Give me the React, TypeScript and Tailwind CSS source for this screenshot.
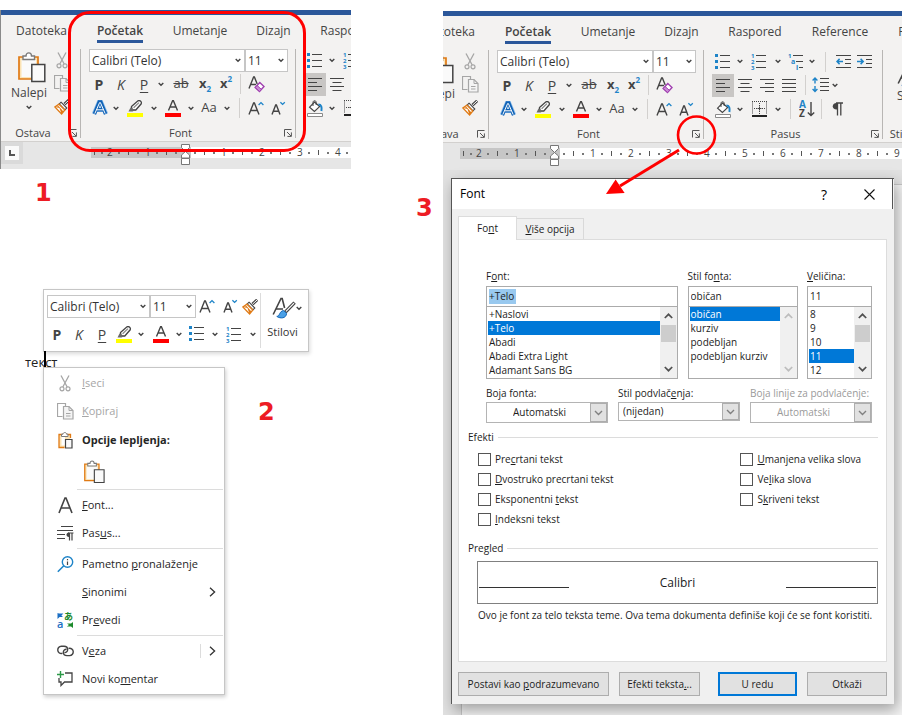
import React from "react";

const INK = "#444444";
const BLUE = "#1e84c8";
const ORANGE = "#e07a14";

/* Text with a mnemonic: the letter after "&" is underlined. */
function Mn({ t }: { t: string }) {
  const i = t.indexOf("&");
  if (i < 0) return <>{t}</>;
  return (
    <>
      {t.slice(0, i)}
      <u>{t[i + 1]}</u>
      {t.slice(i + 2)}
    </>
  );
}

/* ---------- icons ---------- */

function Svg({ w = 16, h = 16, children }: { w?: number; h?: number; children: React.ReactNode }) {
  return (
    <svg width={w} height={h} viewBox={`0 0 ${w} ${h}`} fill="none" className="shrink-0" aria-hidden="true">
      {children}
    </svg>
  );
}

function Chevron() {
  return (
    <Svg w={6} h={5}>
      <path d="M0.7 1 L3 3.3 L5.3 1" stroke={INK} strokeWidth="1.4" />
    </Svg>
  );
}

function CutIcon() {
  return (
    <Svg w={12} h={17}>
      <path d="M2 0.5 L8.2 12 M10 0.5 L3.8 12" stroke="#a6a6a6" strokeWidth="1.3" />
      <circle cx="3" cy="13.8" r="2" stroke="#a6a6a6" strokeWidth="1.2" />
      <circle cx="9" cy="13.8" r="2" stroke="#a6a6a6" strokeWidth="1.2" />
    </Svg>
  );
}

function CopyIcon() {
  return (
    <Svg w={17} h={17}>
      <path d="M5.5 13.5 H0.5 V0.5 H8.5 V3" stroke="#a6a6a6" strokeWidth="1.2" />
      <path d="M6.5 3.5 H12 L16 7.5 V16 H6.5 Z" fill="#f4f4f4" stroke="#a6a6a6" strokeWidth="1.2" />
      <path d="M12 3.5 V7.5 H16 M9 10.5 H13.5 M9 13 H13.5" stroke="#a6a6a6" />
    </Svg>
  );
}

function BrushIcon() {
  return (
    <Svg w={16} h={16}>
      <path d="M15.2 0.8 L10.5 5.2" stroke={INK} strokeWidth="3" />
      <path d="M15 1 L10.5 5.2" stroke="#fff" />
      <path d="M7 3.2 L12.8 9 L11 10.8 L5.2 5 Z" fill="#fff" stroke={INK} strokeWidth="1.1" />
      <path d="M5 5.2 L10.8 11 L7.6 15 L0.8 8 Z" fill="#fff" stroke={ORANGE} strokeWidth="1.3" />
      <path d="M1.2 8 L5.4 9 L7.4 14.6 L9.4 12.4 L4.6 7 Z" fill={ORANGE} />
    </Svg>
  );
}

function ClipboardIcon({ w = 28, h = 31 }: { w?: number; h?: number }) {
  return (
    <svg width={w} height={h} viewBox="0 0 28 31" fill="none" className="shrink-0" aria-hidden="true">
      <path d="M1 5 H20 V27 H1 Z" fill="#fbe3b4" stroke={ORANGE} strokeWidth="1.7" />
      <path d="M3.5 8 H18 V25 H3.5 Z" fill="#fafafa" />
      <path d="M5 7.5 V4 H8 C8 -0.2 13.5 -0.2 13.5 4 H16.5 V7.5 Z" fill="#fff" stroke="#7a7a7a" strokeWidth="1.4" />
      <path d="M13.8 12.5 H26.8 V29.5 H13.8 Z" fill="#fafafa" stroke={INK} strokeWidth="1.5" />
    </svg>
  );
}

function SmallClipboardIcon() {
  return (
    <Svg w={15} h={17}>
      <path d="M6.5 15.5 H1 V2.5 H12.5 V6" fill="#fbe3b4" stroke={ORANGE} strokeWidth="1.3" />
      <path d="M3.5 5 H7 V13.5 H3.5 Z" fill="#fff" />
      <path d="M3.5 4.5 V2.2 H5 C5 0 8.6 0 8.6 2.2 H10 V4.5 Z" fill="#fff" stroke="#7a7a7a" />
      <path d="M7.5 7.5 H14 V16 H7.5 Z" fill="#fafafa" stroke={INK} strokeWidth="1.2" />
    </Svg>
  );
}

function EraserIcon() {
  return (
    <Svg w={17} h={17}>
      <path d="M1 12.5 L5.6 1 H6.4 L9.2 8 M2.7 8.5 H8" stroke={INK} strokeWidth="1.4" />
      <path d="M11.8 6.5 L16 10.5 L11.5 15.5 L7.2 11.5 Z" fill="#fff" stroke="#a03fb0" strokeWidth="1.4" />
      <path d="M9 9.4 L13.4 13.4 L11.5 15.5 L7.2 11.5 Z" fill="#c98ad6" stroke="#a03fb0" />
    </Svg>
  );
}

function GlowAIcon() {
  return (
    <Svg w={16} h={16}>
      <path d="M2 14 L7 2 H9 L14 14 M4.5 9.8 H11.5" stroke="#8fbfec" strokeWidth="4.4" />
      <path d="M2.4 14 L7.2 2 H8.8 L13.6 14 M4.6 9.8 H11.4" stroke="#1062b5" strokeWidth="3.4" />
      <path d="M2.8 13.6 L7.6 2.6 H8.4 L13.2 13.6 M4.8 9.8 H11.2" stroke="#fff" strokeWidth="1" />
    </Svg>
  );
}

function HighlighterIcon() {
  return (
    <Svg w={16} h={17}>
      <path d="M4.5 6.5 L11 0.8 C13 0 15 1.6 14.2 3.8 L8.8 10 H5 Z" fill="#fff" stroke={INK} strokeWidth="1.3" />
      <path d="M3.6 7.2 L8.2 10.2 L5.5 11.6 H1.5 Z" fill="#6a6a6a" />
      <path d="M6.6 7.8 L12 2.6" stroke="#8a8a8a" strokeWidth="1.3" />
      <rect y="13" width="16" height="4" fill="#ffff00" />
    </Svg>
  );
}

function FontColorIcon() {
  return (
    <Svg w={16} h={17}>
      <path d="M3.5 10.5 L7.6 0.8 H8.4 L12.5 10.5 M5 7 H11" stroke={INK} strokeWidth="1.4" />
      <rect y="13" width="16" height="4" fill="#ff0000" />
    </Svg>
  );
}

function GrowIcon() {
  return (
    <Svg w={16} h={15}>
      <path d="M1 13.5 L5.6 2 H6.4 L11 13.5 M2.7 9.5 H9.3" stroke={INK} strokeWidth="1.4" />
      <path d="M10.6 4 L13 1.6 L15.4 4" stroke={BLUE} strokeWidth="1.3" />
    </Svg>
  );
}

function ShrinkIcon() {
  return (
    <Svg w={15} h={15}>
      <path d="M1 13.5 L4.7 4 H5.4 L9 13.5 M2.4 10.2 H7.6" stroke={INK} strokeWidth="1.4" />
      <path d="M9.4 1.2 L11.6 3.4 L13.8 1.2" stroke={BLUE} strokeWidth="1.3" />
    </Svg>
  );
}

function BulletsIcon() {
  return (
    <Svg w={16} h={16}>
      <path d="M0 0 h3 v3 h-3z M0 6 h3 v3 h-3z M0 12 h3 v3 h-3z" fill={BLUE} />
      <path d="M5 1.5 H15 M5 7.5 H15 M5 13.5 H15" stroke={INK} strokeWidth="1.2" />
    </Svg>
  );
}

function IconText({ x, y, s = 6, c = BLUE, t }: { x: number; y: number; s?: number; c?: string; t: string }) {
  return (
    <text x={x} y={y} fontSize={s} fontWeight="700" fill={c} fontFamily="Open Sans, sans-serif">
      {t}
    </text>
  );
}

function NumberingIcon() {
  return (
    <Svg w={16} h={17}>
      <IconText x={0} y={5} t="1" />
      <IconText x={0} y={11} t="2" />
      <IconText x={0} y={17} t="3" />
      <path d="M5 2.5 H15 M5 8.5 H15 M5 14.5 H15" stroke={INK} strokeWidth="1.2" />
    </Svg>
  );
}

function MultilevelIcon() {
  return (
    <Svg w={17} h={17}>
      <IconText x={0} y={5} t="1" />
      <IconText x={3} y={11} s={7} t="a" />
      <IconText x={8} y={17} s={7} t="i" />
      <path d="M5 2.5 H15 M8 8.5 H15 M11 14.5 H15" stroke={INK} strokeWidth="1.2" />
    </Svg>
  );
}

function IndentIcon({ out = false }: { out?: boolean }) {
  return (
    <Svg w={15} h={15}>
      <path d="M0 1.5 H15 M9 5.5 H15 M9 9.5 H15 M0 13.5 H15" stroke={INK} strokeWidth="1.2" />
      <path d={out ? "M7 7.5 H1 M3.6 4.9 L1 7.5 L3.6 10.1" : "M0 7.5 H6 M3.6 4.9 L6.2 7.5 L3.6 10.1"} stroke={BLUE} strokeWidth="1.5" />
    </Svg>
  );
}

function AlignIcon({ kind }: { kind: "left" | "center" | "right" | "justify" }) {
  const d = {
    left: "M0 1.5 H14 M0 5.5 H9 M0 9.5 H14 M0 13.5 H9",
    center: "M0 1.5 H14 M2.5 5.5 H11.5 M0 9.5 H14 M2.5 13.5 H11.5",
    right: "M0 1.5 H14 M5 5.5 H14 M0 9.5 H14 M5 13.5 H14",
    justify: "M0 1.5 H14 M0 5.5 H14 M0 9.5 H14 M0 13.5 H14",
  }[kind];
  return (
    <Svg w={14} h={15}>
      <path d={d} stroke={INK} strokeWidth="1.2" />
    </Svg>
  );
}

function SpacingIcon() {
  return (
    <Svg w={17} h={16}>
      <path d="M3 1 V6.5 M0.6 3.4 L3 1 L5.4 3.4 M3 9 V14.5 M0.6 12 L3 14.4 L5.4 12" stroke={BLUE} strokeWidth="1.4" />
      <path d="M8 1.5 H17 M8 5.5 H17 M8 9.5 H17 M8 13.5 H17" stroke={INK} strokeWidth="1.2" />
    </Svg>
  );
}

function BucketIcon() {
  return (
    <Svg w={16} h={17}>
      <path d="M7.5 2 L12.6 6.6 L7.4 11.4 L2.6 7.2 Z" fill="#fff" stroke={INK} strokeWidth="1.2" />
      <path d="M6 6 V2.4 C6 0.2 9.2 0.2 9.2 2.4 V5" stroke={INK} />
      <path d="M11.4 4.6 C14.4 4.6 15 7 14.4 11" stroke={BLUE} strokeWidth="2" />
      <path d="M0.5 13.5 H15.5 V16.5 H0.5 Z" fill="#fff" stroke="#8a8a8a" />
    </Svg>
  );
}

function BordersIcon() {
  return (
    <Svg w={15} h={16}>
      <path d="M0.5 0.5 V13 M14.5 0.5 V13 M0 0.5 H15 M7.5 2 V13 M2 7.5 H13" stroke={INK} strokeDasharray="1 1" />
      <path d="M5.5 7.5 H9.5 M7.5 5.5 V9.5" stroke={INK} />
      <rect y="14" width="15" height="2" fill="#222" />
    </Svg>
  );
}

function SortIcon() {
  return (
    <Svg w={16} h={18}>
      <IconText x={0} y={8} s={10} t="A" />
      <IconText x={0} y={17} s={10} c={INK} t="Z" />
      <path d="M12 2 V15.5 M8.8 12.4 L12 15.6 L15.2 12.4" stroke={INK} strokeWidth="1.4" />
    </Svg>
  );
}

function PilcrowIcon() {
  return (
    <Svg w={11} h={14}>
      <path d="M5 1 H4.5 C-0.5 1 -0.5 7.4 4.5 7.4 H5 Z" fill={INK} />
      <path d="M4 1 H11 M5.5 1 V13.5 M8.8 1 V13.5" stroke={INK} strokeWidth="1.3" />
    </Svg>
  );
}

function StylesIcon() {
  return (
    <Svg w={24} h={22}>
      <path d="M1.2 17.5 L9 1.5 H10.2 L12.6 11 M4 12 H11" stroke={INK} strokeWidth="1.6" />
      <path d="M22.6 5.6 L13.4 15" stroke={INK} strokeWidth="3.4" />
      <path d="M22 6.2 L14 14.4" stroke="#fff" strokeWidth="1.2" />
      <path d="M4.8 19.4 C8 19.4 7.2 14 11.6 13.6 L14.6 16.4 C14.2 21.4 8.6 22 4.8 19.4 Z" fill="#4aa0e6" stroke="#1568b8" />
    </Svg>
  );
}

function LauncherIcon() {
  return (
    <Svg w={8} h={8}>
      <path d="M0.5 7.5 V0.5 H7.5 M3 3 L7 7 M7.4 3.4 V7.4 H3.4" stroke="#555" />
    </Svg>
  );
}

/* ---------- shared controls ---------- */

function Tool({ w, label, on = false, children }: { w: string; label: string; on?: boolean; children: React.ReactNode }) {
  return (
    <button
      type="button"
      aria-label={label}
      className={`${w} flex h-[23px] shrink-0 items-center justify-center text-[#444444] ${on ? "bg-[#c8c6c4]" : ""}`}
    >
      {children}
    </button>
  );
}

function Drop({ w, label }: { w: string; label: string }) {
  return (
    <Tool w={w} label={label}>
      <Chevron />
    </Tool>
  );
}

function Sep({ w }: { w: string }) {
  return (
    <span className={`${w} flex h-[20px] shrink-0 justify-center`}>
      <span className="w-px bg-[#d2d0ce]" />
    </span>
  );
}

function Combo({ w, label, value }: { w: string; label: string; value: string }) {
  return (
    <div className={`${w} relative h-[23px] shrink-0 border border-[#c6c6c6] bg-white`}>
      <select aria-label={label} className="block h-full w-full appearance-none bg-transparent pl-[2px] text-[12px] text-[#333333] outline-none">
        <option>{value}</option>
      </select>
      <span className="pointer-events-none absolute inset-y-0 right-[3px] flex items-center">
        <Chevron />
      </span>
    </div>
  );
}

const Bold = () => <span className="text-[14px] font-bold">P</span>;
const Italic = () => <span className="text-[14px] italic">K</span>;
const Underlined = () => <span className="text-[14px] underline underline-offset-2">P</span>;

/* ---------- ribbon ---------- */

const TABS = [
  { name: "Datoteka", w: "w-[81px]" },
  { name: "Početak", w: "w-[76px]" },
  { name: "Umetanje", w: "w-[84px]" },
  { name: "Dizajn", w: "w-[63px]" },
  { name: "Raspored", w: "w-[84px]" },
  { name: "Reference", w: "w-[86px]" },
  { name: "Pisma", w: "w-[64px]" },
];

function Group({ w, name, children }: { w: string; name: string; children: React.ReactNode }) {
  return (
    <div className={`${w} flex shrink-0`}>
      <div className="flex min-w-0 flex-1 flex-col">
        <div className="h-[71px]">{children}</div>
        <div className="mt-[5px] flex h-[16px] items-center">
          <span className="flex-1 text-center text-[11px] leading-[16px] text-[#444444]">{name}</span>
          <button type="button" aria-label={`${name}: više opcija`} className="flex w-[15px] justify-center">
            <LauncherIcon />
          </button>
        </div>
      </div>
      <span className="h-[89px] w-px bg-[#b8b6b4]" />
    </div>
  );
}

function Ribbon({ short = false }: { short?: boolean }) {
  return (
    <div className="w-max">
      <nav className="flex h-[34px] pt-[7px]">
        {TABS.slice(0, short ? 5 : 7).map((t) => (
          <button key={t.name} type="button" className={`${t.w} flex shrink-0 justify-center text-[13px] leading-[17px] text-[#444444]`}>
            <span className={t.name === "Početak" ? "h-[21px] border-b-[3px] border-[#2b579a] text-[12px] font-semibold" : "h-[21px] text-[12px]"}>
              {t.name}
            </span>
          </button>
        ))}
      </nav>
      <div className="flex">
        <Group w="w-[80px]" name="Ostava">
          <div className="flex pl-[3px]">
            <button type="button" className="flex w-[50px] flex-col items-center pt-[3px] text-[12px] leading-[16px] text-[#444444]">
              <span className="pl-[6px]">
                <ClipboardIcon />
              </span>
              <span className="pt-[2px] pb-[4px]">Nalepi</span>
              <Chevron />
            </button>
            <div className="flex flex-col">
              <Tool w="w-[16px]" label="Iseci">
                <CutIcon />
              </Tool>
              <Tool w="w-[16px]" label="Kopiraj">
                <CopyIcon />
              </Tool>
              <Tool w="w-[16px]" label="Prenosilac oblikovanja">
                <BrushIcon />
              </Tool>
            </div>
          </div>
        </Group>
        <Group w="w-[215px]" name="Font">
          <div className="pl-[8px]">
            <div className="flex">
              <Combo w="w-[156px]" label="Font" value="Calibri (Telo)" />
              <Combo w="w-[43px]" label="Veličina fonta" value="11" />
            </div>
            <div className="flex h-[24px] items-center">
              <Tool w="w-[20px]" label="Podebljano"><Bold /></Tool>
              <Tool w="w-[24px]" label="Kurziv"><Italic /></Tool>
              <Tool w="w-[22px]" label="Podvučeno"><Underlined /></Tool>
              <Drop w="w-[12px]" label="Stil podvlačenja" />
              <Tool w="w-[28px]" label="Precrtano"><span className="text-[13px] line-through">ab</span></Tool>
              <Tool w="w-[20px]" label="Indeksni tekst">
                <span className="text-[13px] font-bold">x</span>
                <span className="pt-[10px] text-[8px] font-bold text-[#1e84c8]">2</span>
              </Tool>
              <Tool w="w-[22px]" label="Eksponentni tekst">
                <span className="text-[13px] font-bold">x</span>
                <span className="pb-[10px] text-[8px] font-bold text-[#1e84c8]">2</span>
              </Tool>
              <Sep w="w-[6px]" />
              <Tool w="w-[26px]" label="Obriši oblikovanje"><EraserIcon /></Tool>
            </div>
            <div className="flex h-[24px] items-center">
              <Tool w="w-[22px]" label="Efekti teksta"><GlowAIcon /></Tool>
              <Drop w="w-[10px]" label="Izbor efekta teksta" />
              <Tool w="w-[28px]" label="Boja isticanja"><HighlighterIcon /></Tool>
              <Drop w="w-[10px]" label="Izbor boje isticanja" />
              <Tool w="w-[28px]" label="Boja fonta"><FontColorIcon /></Tool>
              <Drop w="w-[8px]" label="Izbor boje fonta" />
              <Tool w="w-[28px]" label="Promeni veličinu slova"><span className="text-[13px]">Aa</span></Tool>
              <Drop w="w-[8px]" label="Izbor veličine slova" />
              <Sep w="w-[16px]" />
              <Tool w="w-[18px]" label="Povećaj font"><GrowIcon /></Tool>
              <Tool w="w-[26px]" label="Smanji font"><ShrinkIcon /></Tool>
            </div>
          </div>
        </Group>
        <Group w="w-[179px]" name="Pasus">
          <div className="pl-[8px]">
            <div className="flex h-[23px] items-center">
              <Tool w="w-[22px]" label="Znakovi za nabrajanje"><BulletsIcon /></Tool>
              <Drop w="w-[12px]" label="Izbor znaka" />
              <Tool w="w-[26px]" label="Numerisanje"><NumberingIcon /></Tool>
              <Drop w="w-[12px]" label="Izbor numerisanja" />
              <Tool w="w-[24px]" label="Lista sa više nivoa"><MultilevelIcon /></Tool>
              <Drop w="w-[8px]" label="Izbor liste" />
              <Sep w="w-[18px]" />
              <Tool w="w-[18px]" label="Smanji uvlačenje"><IndentIcon out /></Tool>
              <Tool w="w-[24px]" label="Povećaj uvlačenje"><IndentIcon /></Tool>
            </div>
            <div className="flex h-[24px] items-center">
              <Tool w="w-[22px]" label="Poravnaj nalevo" on><AlignIcon kind="left" /></Tool>
              <Tool w="w-[22px]" label="Centriraj"><AlignIcon kind="center" /></Tool>
              <Tool w="w-[22px]" label="Poravnaj nadesno"><AlignIcon kind="right" /></Tool>
              <Tool w="w-[22px]" label="Obostrano poravnaj"><AlignIcon kind="justify" /></Tool>
              <Sep w="w-[10px]" />
              <Tool w="w-[20px]" label="Prored"><SpacingIcon /></Tool>
              <Drop w="w-[10px]" label="Izbor proreda" />
            </div>
            <div className="flex h-[24px] items-center">
              <Tool w="w-[22px]" label="Senčenje"><BucketIcon /></Tool>
              <Drop w="w-[12px]" label="Izbor senčenja" />
              <Tool w="w-[26px]" label="Ivice"><BordersIcon /></Tool>
              <Drop w="w-[12px]" label="Izbor ivica" />
              <Sep w="w-[12px]" />
              <Tool w="w-[22px]" label="Sortiraj"><SortIcon /></Tool>
              <Sep w="w-[6px]" />
              <Tool w="w-[26px]" label="Prikaži znakove"><PilcrowIcon /></Tool>
            </div>
          </div>
        </Group>
        {!short && (
          <Group w="w-[60px]" name="Stilovi">
            <button type="button" className="flex flex-col items-start pt-[16px] pl-[14px] text-[12px] leading-[16px] text-[#444444]">
              <StylesIcon />
              <span>Stilovi</span>
            </button>
          </Group>
        )}
      </div>
    </div>
  );
}

/* ---------- ruler ---------- */

const Dot = () => <span className="size-[2px] bg-[#777777]" />;
const Tick = () => <span className="h-[5px] w-px bg-[#555555]" />;

function Unit({ n }: { n: string }) {
  return (
    <div className="grid w-[38px] shrink-0 grid-cols-4 place-items-center">
      <span>{n}</span>
      <Dot />
      <Tick />
      <Dot />
    </div>
  );
}

function Ruler({ units }: { units: string[] }) {
  return (
    <div className="flex h-[11px] min-w-0 flex-1 overflow-visible text-[10px] leading-[11px] text-[#444444]">
      <div className="flex bg-[#c6c6c6]">
        <div className="grid w-[14px] shrink-0 grid-cols-2 place-items-center">
          <Tick />
          <Dot />
        </div>
        <Unit n="2" />
        <Unit n="1" />
      </div>
      <div className="relative flex min-w-0 flex-1 bg-white">
        <div className="grid w-[38px] shrink-0 grid-cols-4 place-items-center">
          <span className="h-full w-full bg-[#c6c6c6]" />
          <Dot />
          <Tick />
          <Dot />
        </div>
        <span className="absolute -top-[3px] left-0">
          <svg width="9" height="21" viewBox="0 0 9 21" className="block" aria-hidden="true">
            <path d="M0.5 0.5 H8.5 V3.5 L4.5 7.5 L0.5 3.5 Z M0.5 14 H8.5 V11 L4.5 7.5 L0.5 11 Z M0.5 14.5 H8.5 V20.5 H0.5 Z" fill="#fff" stroke="#777" />
          </svg>
        </span>
        <div className="flex min-w-0 flex-1 overflow-hidden">
          {units.map((n) => (
            <Unit key={n} n={n} />
          ))}
        </div>
      </div>
    </div>
  );
}

/* ---------- panel 1 ---------- */

function RibbonShot() {
  return (
    <section className="relative">
      <div className="overflow-hidden border-l border-[#8a8a8a] bg-[#e6e6e6]">
        <div className="h-[5px] bg-[#2b579a]" />
        <div className="overflow-hidden border-b border-[#d2d0ce] bg-[#f3f2f1]">
          <Ribbon short />
        </div>
        <div className="flex h-[27px] items-start">
          <button type="button" aria-label="Tabulator nalevo" className="flex h-[22px] w-[22px] items-center justify-center bg-[#dadada]">
            <span className="flex h-[14px] w-[14px] items-center justify-center bg-[#fafafa]">
              <span className="h-[6px] w-[6px] border-b-2 border-l-2 border-[#555555]" />
            </span>
          </button>
          <div className="ml-[68px] flex min-w-0 flex-1 pt-[5px]">
            <Ruler units={["1", "2", "3", "4"]} />
          </div>
        </div>
      </div>
      <div className="pointer-events-none absolute top-[1px] left-[68px] h-[141px] w-[238px] rounded-[22px] border-[3px] border-[#ff0000]" />
    </section>
  );
}

/* ---------- panel 2 ---------- */

function MiniToolbar() {
  return (
    <div className="flex h-[63px] w-[266px] border border-[#c6c6c6] bg-white shadow-[1px_2px_4px_rgba(0,0,0,0.15)]">
      <div className="w-[216px] pt-[5px] pl-[3px]">
        <div className="flex">
          <Combo w="w-[103px]" label="Font" value="Calibri (Telo)" />
          <Combo w="w-[46px]" label="Veličina fonta" value="11" />
          <Tool w="w-[22px]" label="Povećaj font"><GrowIcon /></Tool>
          <Tool w="w-[24px]" label="Smanji font"><ShrinkIcon /></Tool>
          <Tool w="w-[16px]" label="Prenosilac oblikovanja"><BrushIcon /></Tool>
        </div>
        <div className="flex h-[32px] items-center">
          <Tool w="w-[20px]" label="Podebljano"><Bold /></Tool>
          <Tool w="w-[24px]" label="Kurziv"><Italic /></Tool>
          <Tool w="w-[22px]" label="Podvučeno"><Underlined /></Tool>
          <Tool w="w-[22px]" label="Boja isticanja"><HighlighterIcon /></Tool>
          <Drop w="w-[12px]" label="Izbor boje isticanja" />
          <Tool w="w-[28px]" label="Boja fonta"><FontColorIcon /></Tool>
          <Drop w="w-[8px]" label="Izbor boje fonta" />
          <Tool w="w-[28px]" label="Znakovi za nabrajanje"><BulletsIcon /></Tool>
          <Drop w="w-[8px]" label="Izbor znaka" />
          <Tool w="w-[30px]" label="Numerisanje"><NumberingIcon /></Tool>
          <Drop w="w-[8px]" label="Izbor numerisanja" />
        </div>
      </div>
      <span className="my-[3px] w-px bg-[#dcdcdc]" />
      <button type="button" className="flex flex-1 flex-col items-center pt-[7px] text-[11px] leading-[16px] text-[#333333]">
        <span className="flex items-center pl-[4px]">
          <StylesIcon />
          <Chevron />
        </span>
        <span className="pt-[5px] pr-[4px]">Stilovi</span>
      </button>
    </div>
  );
}

function MenuItem({
  icon,
  text,
  tone = "normal",
  more = false,
  split = false,
}: {
  icon?: React.ReactNode;
  text: string;
  tone?: "normal" | "off" | "head";
  more?: boolean;
  split?: boolean;
}) {
  const tones = {
    normal: "h-[28px] text-[#262626]",
    off: "h-[28px] text-[#a6a6a6]",
    head: "h-[30px] font-bold text-[#262626]",
  };
  return (
    <button type="button" className={`${tones[tone]} flex w-full items-center text-left text-[11px] leading-[16px]`}>
      <span className="ml-[11px] flex w-[20px] justify-center">{icon}</span>
      <span className="ml-[7px] flex-1 whitespace-nowrap">
        <Mn t={text} />
      </span>
      {split && <span className="mr-[8px] h-[14px] w-px bg-[#dcdcdc]" />}
      {more && (
        <span className="mr-[8px]">
          <Svg w={7} h={10}>
            <path d="M1 0.8 L5.6 5 L1 9.2" stroke="#333" strokeWidth="1.3" />
          </Svg>
        </span>
      )}
    </button>
  );
}

const Rule = () => <hr className="my-px mr-[1px] ml-[33px] border-0 border-t border-[#dcdcdc]" />;

function ContextMenu() {
  return (
    <div className="w-[182px] border border-[#c6c6c6] bg-white py-px shadow-[1px_2px_4px_rgba(0,0,0,0.2)]">
      <MenuItem icon={<CutIcon />} text="&Iseci" tone="off" />
      <MenuItem icon={<CopyIcon />} text="&Kopiraj" tone="off" />
      <MenuItem icon={<SmallClipboardIcon />} text="Opcije lepljenja:" tone="head" />
      <button type="button" aria-label="Zadrži izvorno oblikovanje" className="flex h-[33px] items-center pl-[40px]">
        <ClipboardIcon w={21} h={24} />
      </button>
      <Rule />
      <MenuItem
        icon={
          <Svg w={15} h={17}>
            <path d="M1 16 L7 1 H8 L14 16 M3.2 11 H11.8" stroke={INK} strokeWidth="1.6" />
          </Svg>
        }
        text="&Font..."
      />
      <MenuItem
        icon={
          <Svg w={17} h={15}>
            <path d="M4 0.5 H16 M0 4.5 H16 M0 8.5 H8 M0 12.5 H8" stroke={INK} strokeWidth="1.2" />
            <path d="M12 6.5 C8.6 6.5 8.6 11 12 11 Z" fill={INK} />
            <path d="M11 7 H16.5 M12.5 7 V14.5 M15 7 V14.5" stroke={INK} strokeWidth="1.2" />
          </Svg>
        }
        text="Pas&us..."
      />
      <Rule />
      <MenuItem
        icon={
          <Svg w={17} h={17}>
            <circle cx="10.5" cy="6" r="5.2" stroke={BLUE} strokeWidth="1.4" />
            <path d="M6.8 9.8 L0.8 15.8" stroke={BLUE} strokeWidth="1.6" />
            <path d="M10.5 3 V4.2 M10.5 5.4 V9" stroke={INK} strokeWidth="1.2" />
          </Svg>
        }
        text="Pametno &pronalaženje"
      />
      <MenuItem text="&Sinonimi" more />
      <MenuItem
        icon={
          <Svg w={17} h={17}>
            <path d="M0.5 1 V7 L2.6 5 H6 L4.4 3.6 L6.4 1.6 H2 Z" fill="#1b6fc4" />
            <path d="M16 16 V10 L14 11.4 H10 L12 13 L9.8 14.6 H14 Z" fill="#1c8a2c" />
            <text x="0" y="16" fontSize="11" fontWeight="600" fill="#1b6fc4" fontFamily="Open Sans, sans-serif">a</text>
            <text x="7" y="8" fontSize="9" fontWeight="700" fill="#1c8a2c" fontFamily="Noto Sans CJK JP, sans-serif">あ</text>
          </Svg>
        }
        text="Pr&evedi"
      />
      <Rule />
      <MenuItem
        icon={
          <Svg w={17} h={12}>
            <path d="M5.5 8.4 C-0.6 9.4 -0.6 1.4 4.4 1.2 H7 C12.4 1.6 11.2 8 7.4 7.6" stroke={INK} strokeWidth="1.4" />
            <path d="M11.5 3.4 C17.6 2.4 17.6 10.4 12.6 10.6 H10 C4.6 10.2 5.8 3.8 9.6 4.2" stroke={INK} strokeWidth="1.4" />
          </Svg>
        }
        text="V&eza"
        more
        split
      />
      <MenuItem
        icon={
          <Svg w={16} h={16}>
            <path d="M8 2 H15 V11 H7.5 L4 14.5 V11 H2 V7" stroke={INK} strokeWidth="1.3" />
            <path d="M0 3.5 H7 M3.5 0 V7" stroke="#2c9a48" strokeWidth="1.4" />
          </Svg>
        }
        text="Novi ko&mentar"
      />
    </div>
  );
}

/* ---------- panel 3 ---------- */

function ScrollArrow({ up = false, off = false }: { up?: boolean; off?: boolean }) {
  return (
    <Svg w={9} h={6}>
      <path d={up ? "M0.8 5 L4.5 1.3 L8.2 5" : "M0.8 1 L4.5 4.7 L8.2 1"} stroke={off ? "#bdbdbd" : "#505050"} strokeWidth="1.7" />
    </Svg>
  );
}

function ListField({
  id,
  w,
  label,
  value,
  items,
  chosen,
  marked = false,
  thumb = true,
}: {
  id: string;
  w: string;
  label: string;
  value: string;
  items: string[];
  chosen: string;
  marked?: boolean;
  thumb?: boolean;
}) {
  return (
    <div className={`${w} shrink-0`}>
      <label htmlFor={id} className="block h-[18px] leading-[16px] whitespace-nowrap">
        <Mn t={label} />
      </label>
      <div className="flex h-[21px] items-center border border-[#ababab] bg-white pl-[2px]">
        <input
          id={id}
          defaultValue={value}
          className={`h-[15px] outline-none ${marked ? "w-[27px] bg-[#99c9ef]" : "w-full bg-transparent"}`}
        />
      </div>
      <div className="flex h-[72px] border border-t-0 border-[#ababab] bg-white">
        <ul role="listbox" aria-label={value} className="min-w-0 flex-1 pl-px">
          {items.map((it) => (
            <li
              key={it}
              role="option"
              aria-selected={it === chosen}
              className={`h-[14px] truncate pl-px leading-[14px] ${it === chosen ? "bg-[#0078d7] text-white" : ""}`}
            >
              {it}
            </li>
          ))}
        </ul>
        <div className="flex w-[17px] shrink-0 flex-col items-center bg-[#f0f0f0]">
          <span className="flex h-[18px] items-center">
            <ScrollArrow up off={!thumb} />
          </span>
          <span className={thumb ? "h-[17px] w-[15px] bg-[#cdcdcd]" : "h-[17px] w-[15px]"} />
          <span className="mt-auto flex h-[18px] items-center">
            <ScrollArrow off={!thumb} />
          </span>
        </div>
      </div>
    </div>
  );
}

function SelectField({ id, label, value, kind }: { id: string; label: string; value: string; kind: "color" | "plain" | "off" }) {
  const text = { color: "pl-[26px]", plain: "pl-[4px]", off: "pl-[26px] text-[#9a9a9a]" }[kind];
  return (
    <div className="w-[122px] shrink-0">
      <label htmlFor={id} className={`block h-[17px] leading-[16px] whitespace-nowrap ${kind === "off" ? "text-[#9a9a9a]" : ""}`}>
        <Mn t={label} />
      </label>
      <div className={`relative border border-[#b4b4b4] bg-white ${kind === "plain" ? "h-[19px]" : "h-[21px]"}`}>
        <select id={id} disabled={kind === "off"} className={`block h-full w-full appearance-none bg-transparent opacity-100 outline-none ${text}`}>
          <option>{value}</option>
        </select>
        <span className="pointer-events-none absolute inset-y-0 right-0 flex w-[17px] items-center justify-center border border-[#adadad] bg-[#e1e1e1]">
          <Svg w={9} h={6}>
            <path d="M1 1 L4.5 4.5 L8 1" stroke="#808080" strokeWidth="1.4" />
          </Svg>
        </span>
      </div>
    </div>
  );
}

function Check({ id, label }: { id: string; label: string }) {
  return (
    <div className="flex h-[20px] items-center">
      <input id={id} type="checkbox" className="size-[13px] appearance-none border border-[#555555] bg-white" />
      <label htmlFor={id} className="pl-[4px] whitespace-nowrap">
        <Mn t={label} />
      </label>
    </div>
  );
}

function Legend({ text }: { text: string }) {
  return (
    <div className="flex h-[16px] items-center gap-[4px] pl-[9px] leading-[16px]">
      <span>{text}</span>
      <span className="h-px flex-1 bg-[#dcdcdc]" />
    </div>
  );
}

function DialogButton({ w, text, primary = false }: { w: string; text: string; primary?: boolean }) {
  return (
    <button
      type="button"
      className={`${w} h-[24px] shrink-0 bg-[#e1e1e1] whitespace-nowrap ${primary ? "border-2 border-[#0078d7]" : "border border-[#adadad]"}`}
    >
      <Mn t={text} />
    </button>
  );
}

function FontDialog() {
  return (
    <div role="dialog" aria-label="Font" className="border-t border-l border-[#555555] bg-[#f0f0f0] text-[10px] text-[#1c1c1c] shadow-[3px_6px_14px_rgba(0,0,0,0.35)]">
      <div className="mr-[1px] flex h-[30px] items-center border-r border-[#555555] bg-white pl-[8px]">
        <span className="flex-1 text-[12px] text-black">Font</span>
        <button type="button" aria-label="Pomoć" className="w-[44px] text-[14px] text-black">?</button>
        <button type="button" aria-label="Zatvori" className="flex w-[46px] justify-center">
          <Svg w={11} h={11}>
            <path d="M0.5 0.5 L10.5 10.5 M10.5 0.5 L0.5 10.5" stroke="#111" strokeWidth="1.1" />
          </Svg>
        </button>
      </div>
      <div className="pt-[7px] pr-[7px] pb-[8px] pl-[6px]">
        <div role="tablist" className="flex items-end">
          <button role="tab" aria-selected="true" type="button" className="-mb-px h-[24px] w-[59px] border border-b-0 border-[#dcdcdc] bg-white">
            <Mn t="Fo&nt" />
          </button>
          <button role="tab" aria-selected="false" type="button" className="h-[21px] w-[67px] border border-b-0 border-l-0 border-[#d9d9d9] bg-[#f0f0f0]">
            <Mn t="&Više opcija" />
          </button>
        </div>
        <div className="border border-[#dcdcdc] bg-white pt-[28px] pr-[8px]">
          <div className="flex justify-between pr-[6px] pl-[27px]">
            <ListField
              id="font-name"
              w="w-[192px]"
              label="F&ont:"
              value="+Telo"
              chosen="+Telo"
              marked
              items={["+Naslovi", "+Telo", "Abadi", "Abadi Extra Light", "Adamant Sans BG"]}
            />
            <ListField
              id="font-style"
              w="w-[110px]"
              label="Stil fo&nta:"
              value="običan"
              chosen="običan"
              thumb={false}
              items={["običan", "kurziv", "podebljan", "podebljan kurziv"]}
            />
            <ListField id="font-size" w="w-[65px]" label="&Veličina:" value="11" chosen="11" items={["8", "9", "10", "11", "12"]} />
          </div>
          <div className="flex justify-between pt-[6px] pr-[6px] pl-[27px]">
            <SelectField id="font-color" label="Boja fonta:" value="Automatski" kind="color" />
            <SelectField id="underline-style" label="Stil podvlač&enja:" value="(nijedan)" kind="plain" />
            <SelectField id="underline-color" label="Boja linije za podvlačenje:" value="Automatski" kind="off" />
          </div>
          <div className="pt-[6px]">
            <Legend text="Efekti" />
          </div>
          <div className="flex justify-between pt-[4px] pr-[17px] pl-[19px]">
            <div>
              <Check id="strike" label="Pre&crtani tekst" />
              <Check id="double-strike" label="&Dvostruko precrtani tekst" />
              <Check id="superscript" label="Eksponentni &tekst" />
              <Check id="subscript" label="&Indeksni tekst" />
            </div>
            <div>
              <Check id="small-caps" label="&Umanjena velika slova" />
              <Check id="all-caps" label="Ve&lika slova" />
              <Check id="hidden" label="S&kriveni tekst" />
            </div>
          </div>
          <div className="pt-[11px]">
            <Legend text="Pregled" />
          </div>
          <div className="mt-[5px] ml-[18px] flex h-[43px] items-center justify-between border border-[#808080] px-px">
            <span className="mt-[9px] h-px w-[90px] bg-[#333333]" />
            <span className="text-[12px]">Calibri</span>
            <span className="mt-[9px] h-px w-[90px] bg-[#333333]" />
          </div>
          <p className="h-[57px] pt-[3px] pl-[19px] leading-[16px] whitespace-nowrap">
            Ovo je font za telo teksta teme. Ova tema dokumenta definiše koji će se font koristiti.
          </p>
        </div>
        <div className="flex pt-[10px]">
          <DialogButton w="w-[151px]" text="Postavi kao &podrazumevano" />
          <span className="w-[10px]" />
          <DialogButton w="w-[81px]" text="Efekti teksta&..." />
          <span className="flex-1" />
          <DialogButton w="w-[79px]" text="U redu" primary />
          <span className="w-[10px]" />
          <DialogButton w="w-[80px]" text="Otkaži" />
        </div>
      </div>
    </div>
  );
}

function DialogShot() {
  return (
    <section className="relative mr-[3px] overflow-hidden bg-[#e1e1e1] pb-[11px]">
      <div className="h-[5px] bg-[#2b579a]" />
      <div className="overflow-hidden border-b border-[#d2d0ce] bg-[#f3f2f1]">
        <div className="-ml-[34px]">
          <Ribbon />
        </div>
      </div>
      <div className="flex h-[27px] items-start bg-[#e6e6e6] pt-[5px] pl-[17px]">
        <Ruler units={["1", "2", "3", "4", "5", "6", "7", "8", "9"]} />
      </div>
      <div className="mt-[14px] ml-[18px] border-t border-l border-[#c6c6c6] bg-[#f5f5f5]">
        <div className="-mt-[7px] -mb-[11px] -ml-[11px] pr-[8px] pb-[11px]">
          <FontDialog />
        </div>
      </div>
      <svg width="120" height="100" viewBox="0 0 120 100" fill="none" className="pointer-events-none absolute top-[99px] left-[157px]" aria-hidden="true">
        <circle cx="96.5" cy="25" r="18.5" stroke="#ff0000" strokeWidth="2.6" />
        <path d="M79 40 L20 76" stroke="#ff0000" strokeWidth="3" />
        <path d="M6 84 L15.6 69.4 L24.6 83 Z" fill="#ff0000" />
      </svg>
    </section>
  );
}

function Step({ n }: { n: string }) {
  return <strong className="font-['DejaVu_Sans',sans-serif] text-[24px] leading-[24px] font-bold text-[#ed1c24]">{n}</strong>;
}

export default function App() {
  return (
    <main className="flex bg-white font-['Open_Sans','Noto_Sans',sans-serif]">
      <div className="w-[351px] shrink-0 pt-[10px]">
        <RibbonShot />
        <div className="pt-[12px] pl-[35px]">
          <Step n="1" />
        </div>
        <div className="pt-[82px] pl-[43px]">
          <MiniToolbar />
          <div className="-ml-[18px] flex h-[15px] text-[13px] leading-[20px] text-[#222222]">
            <span>тек</span>
            <span className="h-[15px] w-0 outline-[0.5px] outline-black" />
            <span>ст</span>
          </div>
          <div className="flex">
            <ContextMenu />
            <div className="pt-[33px] pl-[33px]">
              <Step n="2" />
            </div>
          </div>
        </div>
      </div>
      <div className="w-[92px] shrink-0 pt-[196px] pl-[65px]">
        <Step n="3" />
      </div>
      <div className="min-w-0 flex-1 pt-[11px]">
        <DialogShot />
      </div>
    </main>
  );
}
